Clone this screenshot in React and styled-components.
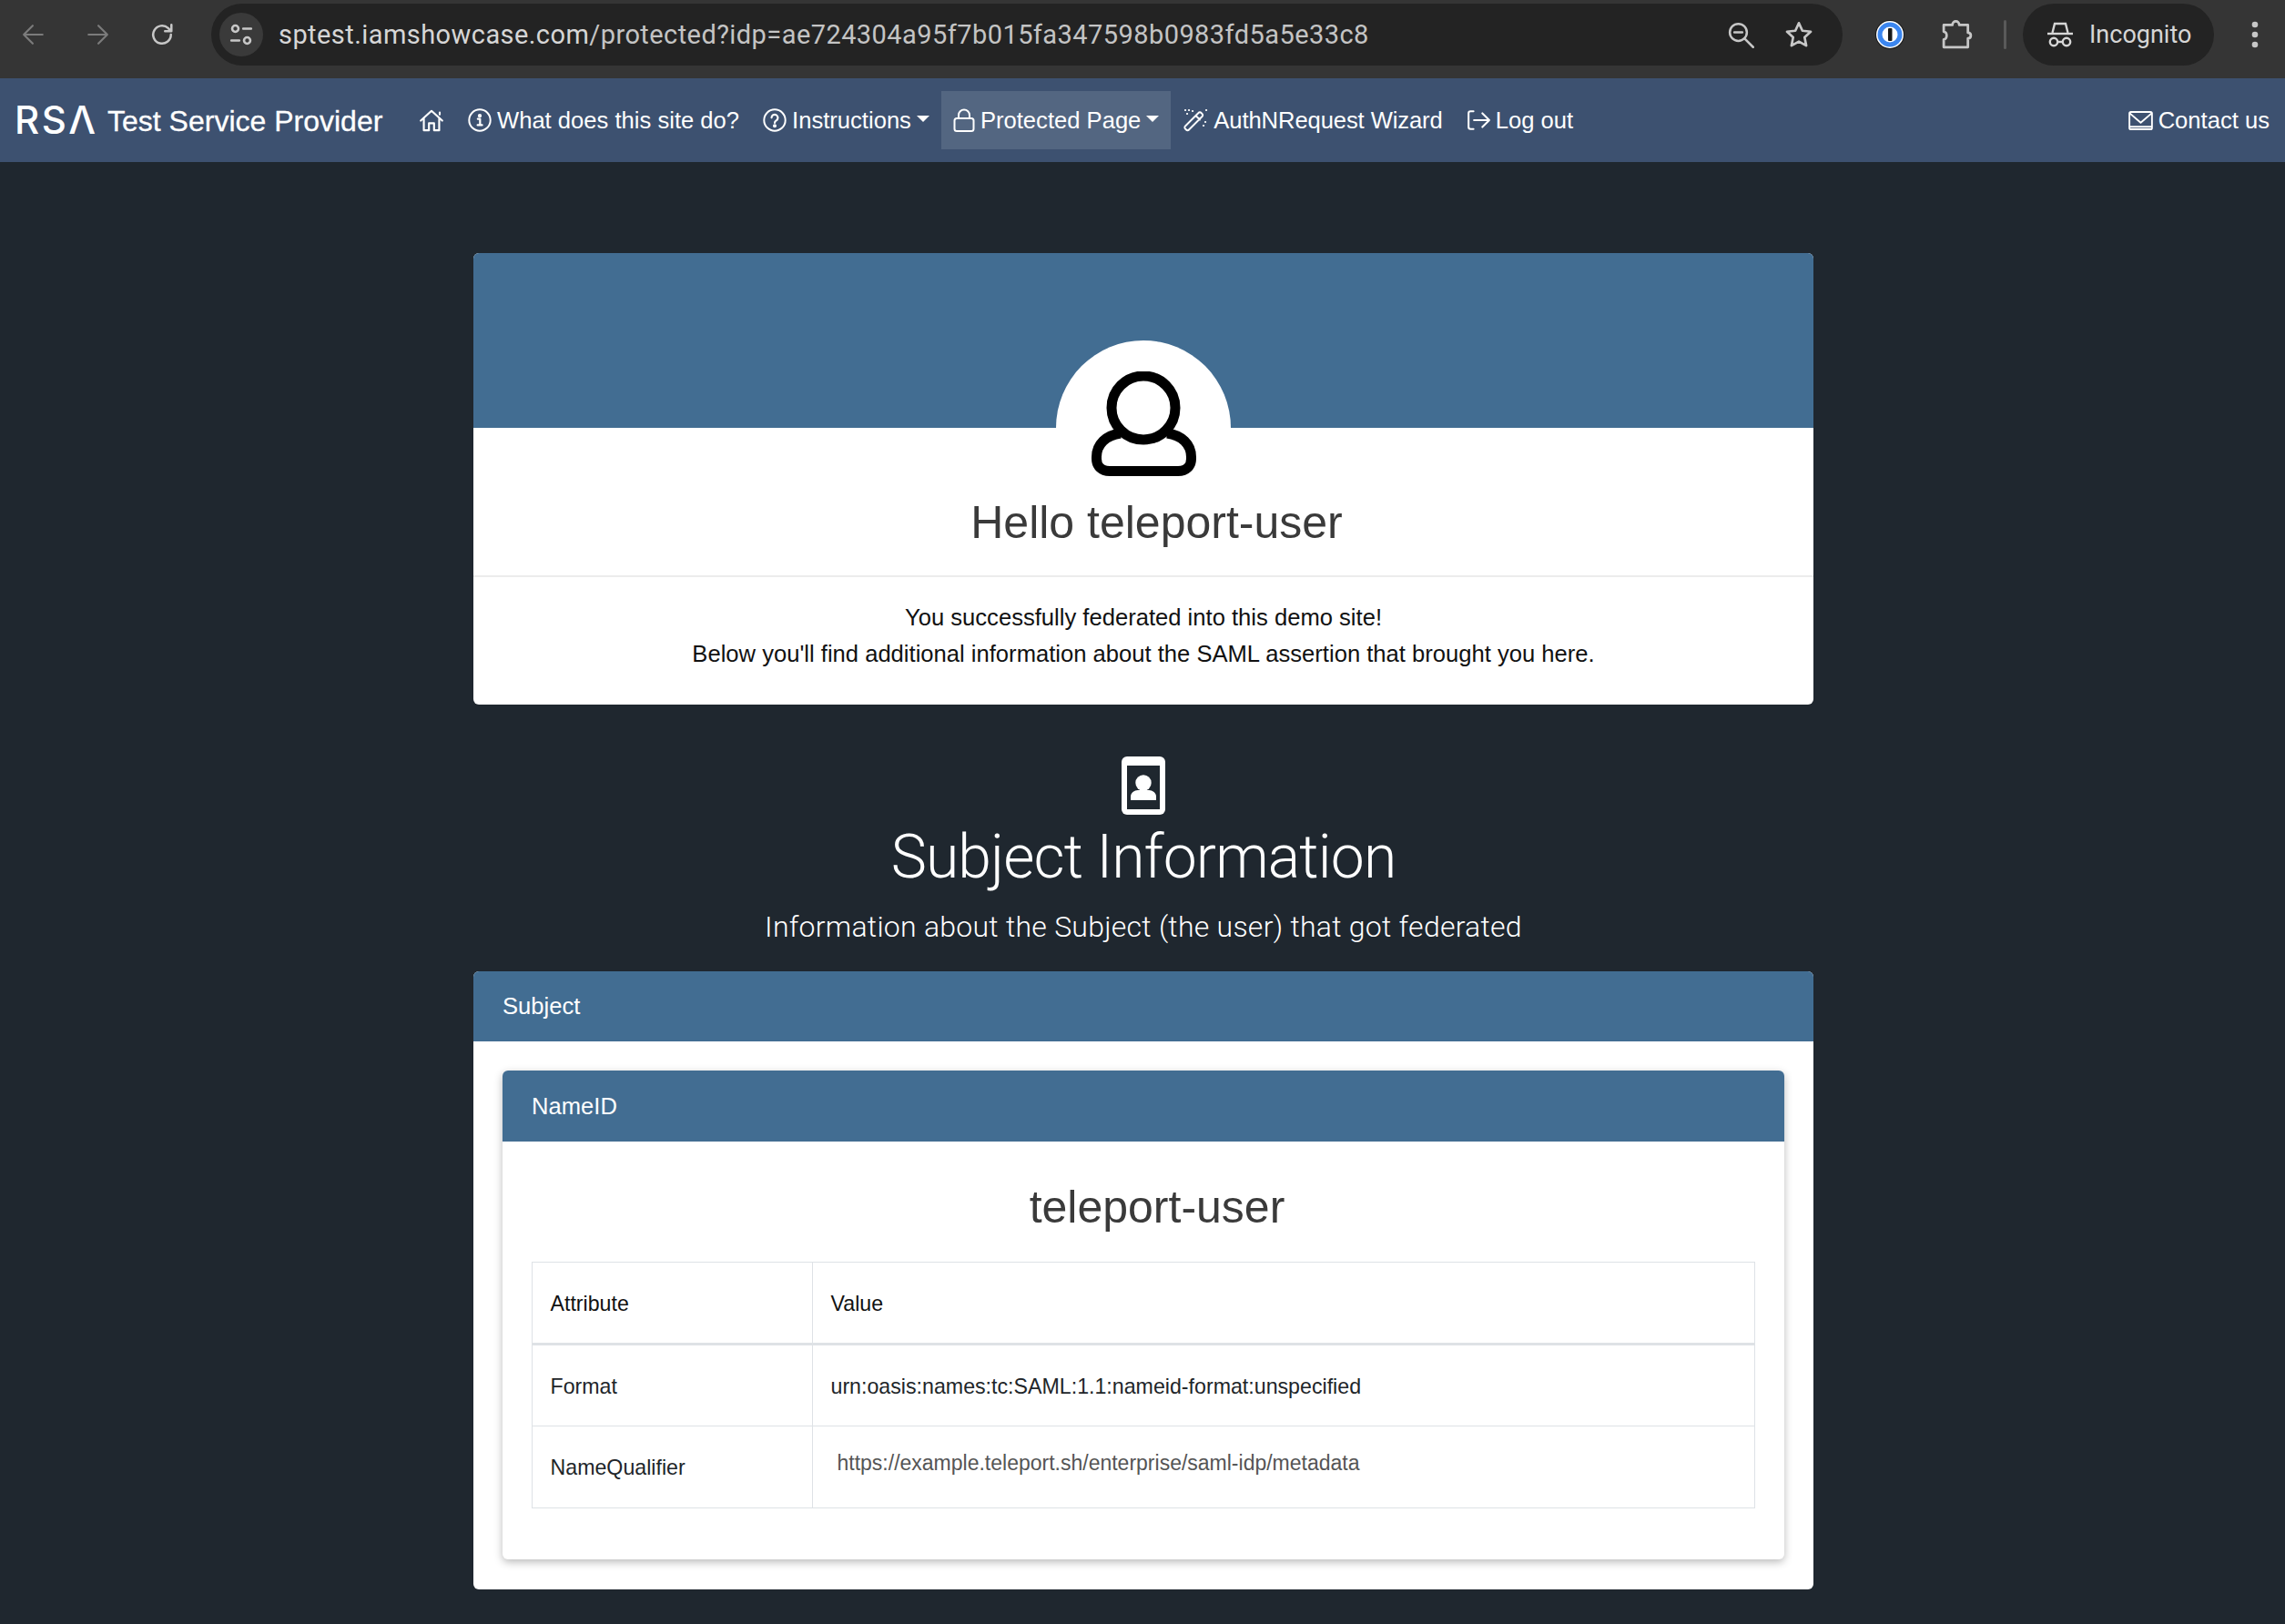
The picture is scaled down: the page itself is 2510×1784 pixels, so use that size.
import React from "react";
import styled, { createGlobalStyle } from "styled-components";

const GlobalStyle = createGlobalStyle`
  html, body {
    margin: 0;
    padding: 0;
    background: #1f272f;
  }
  body {
    font-family: "Liberation Sans", Arial, sans-serif;
    font-size: 25.6px;
    color: #111;
  }
  * {
    box-sizing: border-box;
  }
`;

const Page = styled.div`
  height: 1784px;
  overflow: hidden;
  background: #1f272f;
`;

/* browser chrome */
const Chrome = styled.div`
  height: 86px;
  background: #353535;
  display: flex;
  align-items: center;
  padding: 0 0 10px 24px;
  color: #c7c7c7;
`;
const ChromeButton = styled.span`
  display: flex;
  width: ${(p) => p.$w || 26}px;
  margin-left: ${(p) => p.$ml || 0}px;
  margin-right: ${(p) => p.$mr || 0}px;
  color: ${(p) => (p.$dim ? "#7b7b7b" : "#c7c7c7")};
`;
const AddressBar = styled.div`
  width: 1792px;
  height: 68px;
  border-radius: 34px;
  background: #232323;
  display: flex;
  align-items: center;
  padding: 0 32px 0 9px;
`;
const TuneCircle = styled.span`
  width: 48px;
  height: 48px;
  border-radius: 50%;
  background: #3a3a3a;
  display: flex;
  align-items: center;
  justify-content: center;
  margin-right: 17px;
`;
const Url = styled.div`
  flex: 1;
  font-family: "Roboto", sans-serif;
  font-size: 29px;
  letter-spacing: 0.43px;
  white-space: nowrap;
  color: #c4c4c4;
  & b {
    font-weight: 400;
    color: #d6d6d6;
  }
`;
const Divider = styled.span`
  width: 3px;
  height: 32px;
  border-radius: 2px;
  background: #5a5a5a;
  margin: 0 18px 0 34px;
`;
const IncognitoPill = styled.div`
  width: 210px;
  height: 68px;
  border-radius: 34px;
  background: #232323;
  display: flex;
  align-items: center;
  padding-left: 26px;
  gap: 17px;
  font-family: "Roboto", sans-serif;
  font-size: 27px;
  color: #d6d6d6;
`;
const Dots = styled.span`
  display: flex;
  margin-left: 41px;
`;

/* site nav */
const Nav = styled.nav`
  height: 92px;
  background: #3d5170;
  display: flex;
  align-items: center;
  padding: 0 4px 0 16px;
  color: #fff;
`;
const Logo = styled.span`
  font-family: "Inter", sans-serif;
  font-size: 42px;
  font-weight: 500;
  letter-spacing: 2.5px;
  line-height: 1;
  width: 102px;
  white-space: nowrap;
`;
const BrandText = styled.span`
  font-size: 32px;
  width: 329px;
  padding-top: 2px;
  white-space: nowrap;
  -webkit-text-stroke: 0.3px #fff;
`;
const NavItem = styled.a`
  height: 64px;
  display: flex;
  align-items: center;
  gap: 6px;
  padding: 0 13px;
  font-size: 25.6px;
  letter-spacing: ${(p) => p.$tight || 0}px;
  white-space: nowrap;
  background: ${(p) => (p.$active ? "#536681" : "transparent")};
  margin-left: ${(p) => (p.$push ? "auto" : "0")};
  ${(p) =>
    p.$caret &&
    `&::after {
      content: "";
      width: 0;
      height: 0;
      margin-top: -3px;
      border-top: 7px solid #fff;
      border-left: 7px solid transparent;
      border-right: 7px solid transparent;
    }`}
`;

/* content */
const Main = styled.main`
  width: 1472px;
  margin-left: 520px;
  padding-top: 100px;
`;
const Card = styled.section`
  background: #fff;
  border-radius: 6px;
  overflow: hidden;
`;
const Banner = styled.div`
  height: 192px;
  background: #426d92;
`;
const Avatar = styled.div`
  width: 192px;
  height: 192px;
  margin: -96px auto -22px;
  border-radius: 50%;
  background: #fff;
  display: flex;
  justify-content: center;
  padding-top: 34px;
  position: relative;
`;
const Hello = styled.h2`
  position: relative;
  margin: 0;
  padding: 0 0 28px 29px;
  text-align: center;
  font-size: 50px;
  line-height: 60px;
  font-weight: 400;
  color: #3a3a3a;
  border-bottom: 2px solid #ececec;
`;
const Welcome = styled.div`
  padding: 24px 0 36px;
  text-align: center;
  font-size: 25.6px;
  line-height: 40px;
  color: #111;
`;
const SectionHead = styled.header`
  display: flex;
  flex-direction: column;
  align-items: center;
  padding: 56.5px 0 0;
  color: #fff;
`;
const SectionTitle = styled.h1`
  margin: 7px 0 0;
  font-family: "Roboto", sans-serif;
  font-weight: 300;
  font-size: 66px;
  letter-spacing: -0.85px;
  line-height: 80px;
`;
const SectionLead = styled.p`
  margin: 12px 0 25.5px;
  font-family: "Roboto", sans-serif;
  font-weight: 300;
  font-size: 32px;
  letter-spacing: 0.25px;
  line-height: 48px;
`;
const CardHeader = styled.div`
  height: ${(p) => p.$h}px;
  background: #426d92;
  color: #fff;
  display: flex;
  align-items: center;
  padding: 0 32px;
  font-size: 25.6px;
`;
const CardBody = styled.div`
  padding: 32px 32px 33px;
`;
const InnerCard = styled.div`
  background: #fff;
  border-radius: 6px;
  overflow: hidden;
  box-shadow: 0 3px 10px rgba(0, 0, 0, 0.28);
`;
const InnerBody = styled.div`
  padding: 42px 32px 56px;
`;
const UserName = styled.h3`
  margin: 0 0 30px;
  padding-left: 30px;
  text-align: center;
  font-size: 50px;
  line-height: 60px;
  font-weight: 400;
  color: #3a3a3a;
`;
const Table = styled.table`
  width: 100%;
  border-collapse: collapse;
  font-size: 23.2px;
  color: #212529;
  table-layout: fixed;
`;
const Th = styled.th`
  height: 90px;
  padding: 2px 20px 0 19.5px;
  text-align: left;
  font-weight: 400;
  color: #111;
  border: 1px solid #dee2e6;
  border-bottom: 3px solid #dee2e6;
  width: ${(p) => p.$w || "auto"};
`;
const Td = styled.td`
  height: 90px;
  padding: 2px 20px 0 19.5px;
  border: 1px solid #dee2e6;
`;
const QualifierValue = styled.span`
  display: block;
  padding: 0 0 10px 7px;
  font-size: 23px;
  color: #555;
`;

const Svg = ({ w = 26, h = 26, vb = "0 0 24 24", sw = 2, children }) => (
  <svg
    width={w}
    height={h}
    viewBox={vb}
    fill="none"
    stroke="currentColor"
    strokeWidth={sw}
    strokeLinecap="round"
    strokeLinejoin="round"
  >
    {children}
  </svg>
);

const ArrowLeft = () => (
  <Svg sw={2}>
    <path d="M21 12H3M11 3l-9 9 9 9" />
  </Svg>
);
const ArrowRight = () => (
  <Svg sw={2}>
    <path d="M3 12h18M13 3l9 9-9 9" />
  </Svg>
);
const Reload = () => (
  <Svg sw={2.3}>
    <path d="M21 12a9 9 0 1 1-2.800-6.500L21 8.400M21.500 2v6.500H15" />
  </Svg>
);
const Tune = () => (
  <Svg sw={2.4}>
    <circle cx="6" cy="6" r="3.200" />
    <path d="M14 6h8M2 18h8" />
    <circle cx="18" cy="18" r="3.200" />
  </Svg>
);
const ZoomOut = () => (
  <Svg w={30} h={30} sw={2}>
    <circle cx="10" cy="10" r="7.500" />
    <path d="M15.500 15.500L23 23M6.500 10h7" />
  </Svg>
);
const Star = () => (
  <Svg w={32} h={32} sw={2}>
    <path d="M12 2.500l2.900 6.300 6.900.8-5.100 4.700 1.400 6.800-6.100-3.400-6.100 3.400 1.400-6.800L2.200 9.600l6.900-.8z" />
  </Svg>
);
const OnePassword = () => (
  <svg width="32" height="32" viewBox="0 0 32 32">
    <circle cx="16" cy="16" r="16" fill="#1a1a1a" />
    <circle cx="16" cy="16" r="15" fill="#fff" />
    <circle cx="16" cy="16" r="13.500" fill="#3b86f0" />
    <circle cx="16" cy="16" r="8.500" fill="#fff" />
    <rect x="14" y="9" width="4.500" height="14" rx="1" fill="#1a1a1a" />
  </svg>
);
const Puzzle = () => (
  <Svg w={34} h={34} vb="0 0 32 32" sw={2.600}>
    <path d="M2 6h9c0-5 7-5 7 0h9v8c4 0 4 6 0 6v9H2v-8c4 0 4-8 0-8z" />
  </Svg>
);
const Incognito = () => (
  <svg width="30" height="30" viewBox="0 0 30 30" fill="none" stroke="currentColor" strokeWidth="2.400">
    <path d="M6.500 13L9 3h12l2.500 10" />
    <path d="M1 14h28" />
    <circle cx="8" cy="23" r="4.200" />
    <circle cx="22" cy="23" r="4.200" />
    <path d="M12 23h6" />
  </svg>
);
const Kebab = () => (
  <svg width="8" height="30" viewBox="0 0 8 30" fill="currentColor">
    <circle cx="4" cy="4" r="3.300" />
    <circle cx="4" cy="15" r="3.300" />
    <circle cx="4" cy="26" r="3.300" />
  </svg>
);

const Home = () => (
  <Svg w={28} h={27} sw={1.900}>
    <path d="M1.500 12L12 2.500 22.500 12M20 6V4M4.500 10v11.500h5v-7h5v7h5V10" />
  </Svg>
);
const Info = () => (
  <Svg sw={1.800}>
    <circle cx="12" cy="12" r="10.800" />
    <circle cx="12" cy="7.500" r="1.100" fill="currentColor" />
    <path d="M10 10.800h2.300v6M9.800 17h4.600" strokeWidth="2" />
  </Svg>
);
const Help = () => (
  <Svg sw={1.800}>
    <circle cx="12" cy="12" r="10.800" />
    <path d="M8.800 9.500a3.200 3.200 0 1 1 4.800 2.800c-1 .6-1.600 1.200-1.600 2.400" strokeWidth="2" />
    <circle cx="12" cy="17.800" r="1" fill="currentColor" />
  </Svg>
);
const Lock = () => (
  <Svg w={24} vb="0 0 24 26" sw={2}>
    <rect x="1.500" y="11" width="21" height="14" rx="2.500" />
    <path d="M6 11V7.500a6 6 0 0 1 12 0V11" />
  </Svg>
);
const Wand = () => (
  <Svg w={28} h={27} vb="0 0 28 27" sw={1.900}>
    <path d="M3 19.500L17.500 5a2 2 0 0 1 3 0l1 1a2 2 0 0 1 0 3L7 23.500a2 2 0 0 1-3 0l-1-1a2 2 0 0 1 0-3zM14.500 8l4.500 4.500" />
    <path d="M3 2h.1M7 2h.1M11 3h.1M5 6h.1M25 15h.1M23 19h.1M26 2h.1" strokeWidth="2.200" />
  </Svg>
);
const LogOut = () => (
  <Svg sw={1.900}>
    <path d="M7 3H4a2 2 0 0 0-2 2v14a2 2 0 0 0 2 2h3M7.500 12H23M16 5l7 7-7 7" />
  </Svg>
);
const Mail = () => (
  <Svg w={27} h={27} sw={1.700}>
    <rect x="1" y="3.500" width="22" height="17" rx="1.500" />
    <path d="M1.500 5l10.500 9L22.500 5M1.500 18h21" />
  </Svg>
);

const UserOutline = () => (
  <svg width="115" height="118" viewBox="0 0 115 118" fill="none" stroke="#000" strokeWidth="11">
    <circle cx="57" cy="40" r="35" />
    <path d="M32 68C16 70 5.500 80 5.500 94v2c0 8 5.500 13.500 14.500 13.500h75c9 0 14.500-5.500 14.500-13.500v-2c0-14-10.500-24-26.500-26" />
  </svg>
);
const Portrait = () => (
  <svg width="48" height="64" viewBox="0 0 48 64">
    <rect width="48" height="64" rx="6" fill="#fff" />
    <rect x="6" y="10" width="36" height="48" fill="#1f272f" />
    <circle cx="24" cy="29" r="8.700" fill="#fff" />
    <path d="M10 48v-4c0-4 4-7 8-7h12c4 0 8 3 8 7v4z" fill="#fff" />
  </svg>
);

export default function App() {
  return (
    <Page>
      <GlobalStyle />
      <Chrome>
        <ChromeButton $dim $mr={44}>
          <ArrowLeft />
        </ChromeButton>
        <ChromeButton $dim $mr={45}>
          <ArrowRight />
        </ChromeButton>
        <ChromeButton $mr={41}>
          <Reload />
        </ChromeButton>
        <AddressBar>
          <TuneCircle>
            <Tune />
          </TuneCircle>
          <Url>
            <b>sptest.iamshowcase.com</b>/protected?idp=ae724304a95f7b015fa347598b0983fd5a5e33c8
          </Url>
          <ChromeButton $w={30} $mr={33}>
            <ZoomOut />
          </ChromeButton>
          <ChromeButton $w={32}>
            <Star />
          </ChromeButton>
        </AddressBar>
        <ChromeButton $w={32} $ml={36} $mr={41}>
          <OnePassword />
        </ChromeButton>
        <ChromeButton $w={34}>
          <Puzzle />
        </ChromeButton>
        <Divider />
        <IncognitoPill>
          <Incognito />
          Incognito
        </IncognitoPill>
        <Dots>
          <Kebab />
        </Dots>
      </Chrome>

      <Nav>
        <Logo>RSΛ</Logo>
        <BrandText>Test Service Provider</BrandText>
        <NavItem>
          <Home />
        </NavItem>
        <NavItem>
          <Info />
          What does this site do?
        </NavItem>
        <NavItem $caret>
          <Help />
          Instructions
        </NavItem>
        <NavItem $caret $active>
          <Lock />
          Protected Page
        </NavItem>
        <NavItem $tight={-0.1}>
          <Wand />
          AuthNRequest Wizard
        </NavItem>
        <NavItem>
          <LogOut />
          Log out
        </NavItem>
        <NavItem $push>
          <Mail />
          Contact us
        </NavItem>
      </Nav>

      <Main>
        <Card>
          <Banner />
          <Avatar>
            <UserOutline />
          </Avatar>
          <Hello>Hello teleport-user</Hello>
          <Welcome>
            You successfully federated into this demo site!
            <br />
            Below you'll find additional information about the SAML assertion that brought you here.
          </Welcome>
        </Card>

        <SectionHead>
          <Portrait />
          <SectionTitle>Subject Information</SectionTitle>
          <SectionLead>Information about the Subject (the user) that got federated</SectionLead>
        </SectionHead>

        <Card>
          <CardHeader $h={77}>Subject</CardHeader>
          <CardBody>
            <InnerCard>
              <CardHeader $h={78}>NameID</CardHeader>
              <InnerBody>
                <UserName>teleport-user</UserName>
                <Table>
                  <thead>
                    <tr>
                      <Th $w="308px">Attribute</Th>
                      <Th>Value</Th>
                    </tr>
                  </thead>
                  <tbody>
                    <tr>
                      <Td>Format</Td>
                      <Td>urn:oasis:names:tc:SAML:1.1:nameid-format:unspecified</Td>
                    </tr>
                    <tr>
                      <Td>NameQualifier</Td>
                      <Td>
                        <QualifierValue>https://example.teleport.sh/enterprise/saml-idp/metadata</QualifierValue>
                      </Td>
                    </tr>
                  </tbody>
                </Table>
              </InnerBody>
            </InnerCard>
          </CardBody>
        </Card>
      </Main>
    </Page>
  );
}
